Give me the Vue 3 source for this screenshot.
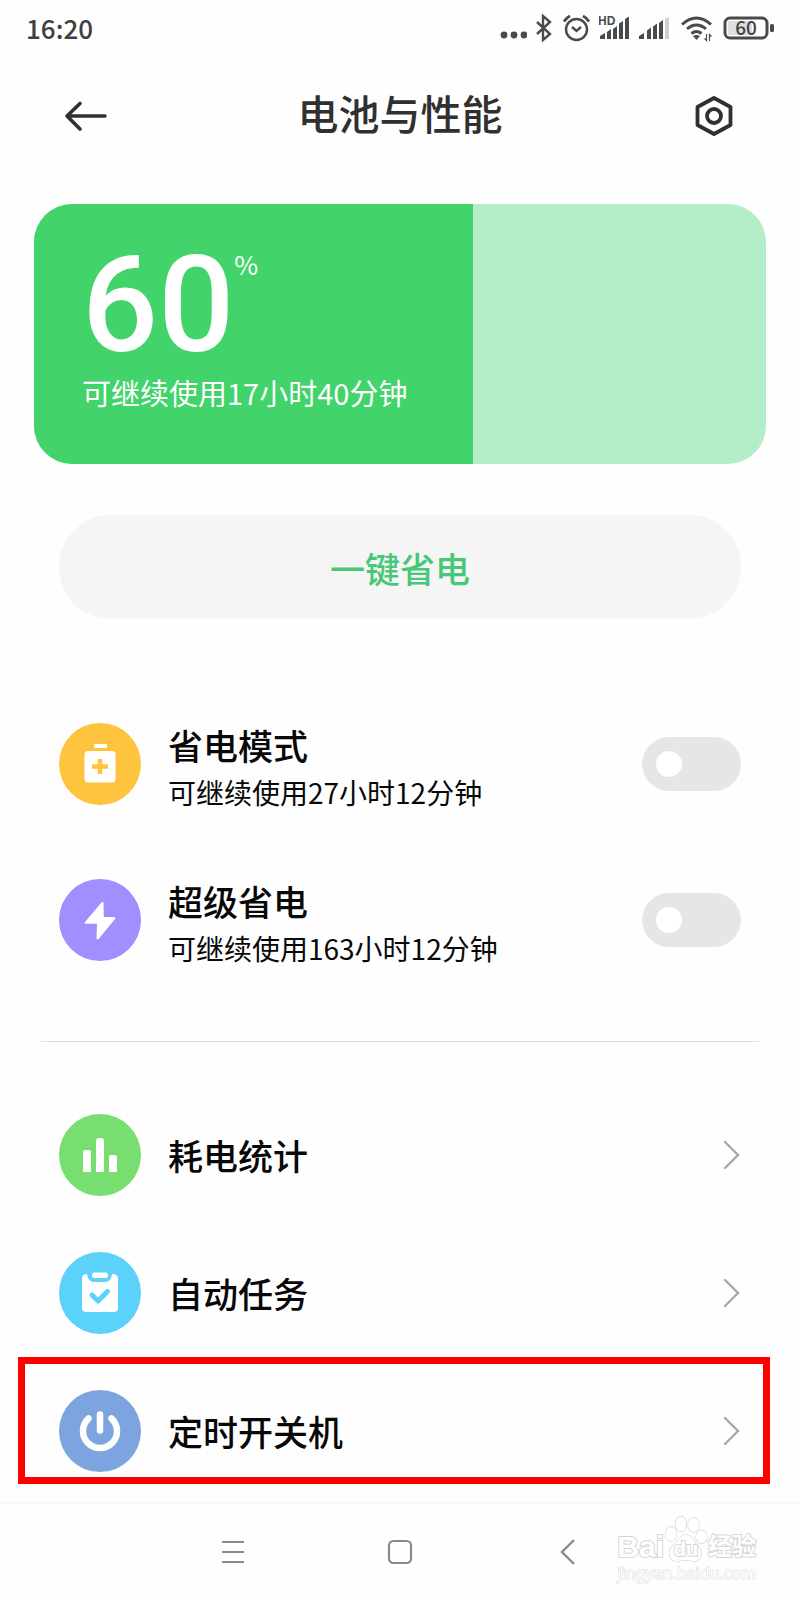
<template>
  <div class="phone">
    <div class="status">
      <span class="time">16:20</span>
      <div class="status-icons">
        <svg width="28" height="28" viewBox="0 0 28 28" fill="#4a4a4a">
          <circle cx="5" cy="21" r="3.4" />
          <circle cx="15" cy="21" r="3.4" />
          <circle cx="25" cy="21" r="3.4" />
        </svg>
        <svg width="20" height="28" viewBox="0 0 20 28" fill="none" stroke="#4a4a4a" stroke-width="2.4">
          <path d="M2 8l13 12-7 6V2l7 6L2 20" />
        </svg>
        <svg width="28" height="28" viewBox="0 0 28 28" fill="none" stroke="#4a4a4a" stroke-width="2.4">
          <circle cx="13.5" cy="15.5" r="10.5" />
          <path d="M9 13l4.500 4 4.500-4" />
          <path d="M1 7.500Q3 4 7 2M20 2q4 2 6 5.500" stroke-width="2.8" />
        </svg>
        <svg width="32" height="28" viewBox="0 0 32 28" fill="#4a4a4a">
          <text x="-1" y="11" class="hd">HD</text>
          <path d="M1 25v-3l5-3v6zM8 25v-7l4-3v10zM14 25V15l4-3v13zM20 25V9.500L24 7v18zM26 25V5l4-2.500V25z" />
        </svg>
        <svg width="34" height="28" viewBox="0 0 34 28" fill="#4a4a4a">
          <path d="M0 25v-3l5-3v6zM8 25v-8.500l4-3V25zM14 25V12.500l4-3V25zM20 25V9l4-3v19z" />
          <path d="M26 25V5l4-2v22z" fill="#cfcfcf" />
        </svg>
        <svg width="34" height="28" viewBox="0 0 34 28" fill="none" stroke="#4a4a4a" stroke-width="3">
          <path d="M1 10.500Q8 4 15.500 4T30 10.500M6 15q4.500-4 9.500-4t9.500 4M10.500 19.500q2.500-2 5-2t5 2" />
          <path d="M12 22q3.500-2 7 0l-3.500 4z" fill="#4a4a4a" stroke="none" />
          <path d="M25.500 20v6.500l-2-2M28.500 27v-6.500l2 2" stroke-width="1.2" />
        </svg>
        <svg width="52" height="28" viewBox="0 0 52 28">
          <rect x="5" y="7" width="24" height="14" fill="#dedede" />
          <rect x="2" y="4" width="42" height="20" rx="5" fill="none" stroke="#4a4a4a" stroke-width="3" />
          <rect x="47" y="10" width="4" height="8" rx="1.5" fill="#4a4a4a" />
          <text x="23" y="21" text-anchor="middle" class="charge">60</text>
        </svg>
      </div>
    </div>

    <header class="header">
      <button class="icon-btn" type="button" aria-label="返回">
        <svg width="44" height="44" viewBox="0 0 44 44" fill="none" stroke="#303030" stroke-width="3.6" stroke-linecap="round" stroke-linejoin="round">
          <path d="M41 22H3M16 9.500L3 22l13 13" />
        </svg>
      </button>
      <h1>电池与性能</h1>
      <button class="icon-btn" type="button" aria-label="设置">
        <svg width="44" height="44" viewBox="0 0 44 44" fill="none" stroke="#303030" stroke-width="3.8" stroke-linejoin="round">
          <path d="M22 4l16.500 9v18L22 40 5.500 31V13z" />
          <circle cx="22" cy="22" r="7" />
        </svg>
      </button>
    </header>

    <section class="battery">
      <div class="battery-fill" :style="{ width: level + '%' }">
        <div class="level">
          <span class="level-num">{{ level }}</span>
          <span class="level-unit">%</span>
        </div>
        <p>可继续使用17小时40分钟</p>
      </div>
    </section>

    <button class="save-btn" type="button">一键省电</button>

    <section class="modes">
      <label v-for="mode in modes" :key="mode.id" class="mode">
        <svg class="badge" viewBox="0 0 82 82">
          <circle cx="41" cy="41" r="41" :fill="mode.color" />
          <g v-if="mode.id === 'saver'">
            <rect x="35" y="21" width="13" height="4" rx="1" fill="#fff" />
            <rect x="25.5" y="28" width="31" height="31.5" rx="3.5" fill="#fff" />
            <path d="M41 36v15M33 43.500h16" :stroke="mode.color" stroke-width="4.5" />
          </g>
          <path v-else d="M42.500 23.500L26 43q-1 1.700 1 1.700h11L37.500 59q.500 2.500 2.500.500L56 40q1-2-1-2H44.800L44.500 24q-.500-2-2-.500z" fill="#fff" />
        </svg>
        <span class="mode-text">
          <span class="row-title">{{ mode.title }}</span>
          <span class="mode-note">{{ mode.note }}</span>
        </span>
        <input v-model="mode.on" class="switch" type="checkbox" role="switch" />
      </label>
    </section>

    <hr class="divider" />

    <nav class="links">
      <a v-for="item in links" :key="item.id" href="#" class="link" :class="{ marked: item.marked }">
        <svg class="badge" viewBox="0 0 82 82">
          <circle cx="41" cy="41" r="41" :fill="item.color" />
          <path v-if="item.id === 'stats'" d="M24 58V38q0-2 2-2h4q2 0 2 2v20zM37 58V27q0-3 3-3h2q3 0 3 3v31zM50 58V43q0-2 2-2h4q2 0 2 2v15z" fill="#fff" />
          <g v-else-if="item.id === 'tasks'">
            <path d="M27 22h1q1 8 7 8h11q6 0 7-8h2q4 1 4 4v30q0 4-4 4H27q-4 0-4-4V26q0-3 4-4z" fill="#fff" />
            <rect x="33" y="20.5" width="16" height="5.5" rx="2.5" fill="#fff" />
            <path d="M33 43l6 6 9.500-9.500" fill="none" :stroke="item.color" stroke-width="5" stroke-linecap="round" stroke-linejoin="round" />
          </g>
          <path v-else d="M41 24.500v16M29.500 28.500a17 17 0 1 0 23 0" fill="none" stroke="#fff" stroke-width="6.5" stroke-linecap="round" />
        </svg>
        <span class="row-title">{{ item.title }}</span>
        <svg class="chevron" viewBox="0 0 18 30" fill="none" stroke="#a8a8a8" stroke-width="2.4" stroke-linecap="round">
          <path d="M2 2l13 13L2 28" />
        </svg>
      </a>
    </nav>

    <footer class="sysnav">
      <button type="button" aria-label="菜单">
        <svg width="26" height="26" viewBox="0 0 26 26" stroke="#8a8a8a" stroke-width="2.2">
          <path d="M2 3h22M2 13h22M2 23h22" />
        </svg>
      </button>
      <button type="button" aria-label="主页">
        <svg width="26" height="26" viewBox="0 0 26 26" fill="none" stroke="#8a8a8a" stroke-width="2.2">
          <rect x="2" y="2" width="22" height="22" rx="4.5" />
        </svg>
      </button>
      <button type="button" aria-label="后退">
        <svg width="26" height="26" viewBox="0 0 26 26" fill="none" stroke="#8a8a8a" stroke-width="2.4">
          <path d="M20 1L8 13l12 12" />
        </svg>
      </button>
      <div class="brand">
        <div class="brand-name">
          <span>Bai</span>
          <span class="paw">
            <svg width="44" height="48" viewBox="0 0 44 48" fill="#fff" stroke="#d6d6d6" stroke-width="1.3">
              <ellipse cx="7" cy="19" rx="5.5" ry="7" />
              <ellipse cx="17" cy="9" rx="5.5" ry="7.5" />
              <ellipse cx="29.5" cy="10" rx="5.5" ry="7" />
              <ellipse cx="37.5" cy="22" rx="5.5" ry="6.5" />
              <path d="M22 20c6 0 7 6 11 10 6 5 6 16-3 16-4 0-5-1-8-1s-5 1-9 1c-9 0-10-11-3-16 4-4 6-10 12-10z" />
            </svg>
            <span class="du">du</span>
          </span>
          <span class="exp">经验</span>
        </div>
        <div class="brand-url">jingyan.baidu.com</div>
      </div>
    </footer>
  </div>
</template>

<script setup>
import { ref } from 'vue'

const level = ref(60)

const modes = ref([
  { id: 'saver', title: '省电模式', note: '可继续使用27小时12分钟', color: '#ffc43d', on: false },
  { id: 'ultra', title: '超级省电', note: '可继续使用163小时12分钟', color: '#a08fff', on: false },
])

const links = [
  { id: 'stats', title: '耗电统计', color: '#79de70' },
  { id: 'tasks', title: '自动任务', color: '#5bd2fa' },
  { id: 'power', title: '定时开关机', color: '#7da4de', marked: true },
]
</script>

<style>
body {
  margin: 0;
  background: #fefefe;
}
</style>

<style scoped>
.phone {
  display: flex;
  flex-direction: column;
  font-family: 'Noto Sans CJK SC', sans-serif;
  color: #080808;
}

button {
  padding: 0;
  border: 0;
  background: none;
  font-family: inherit;
  cursor: pointer;
}

svg {
  display: block;
  flex: none;
}

/* 状态栏 */
.status {
  display: flex;
  align-items: center;
  justify-content: space-between;
  height: 56px;
  padding: 0 25px 0 26px;
}

.time {
  font-size: 26px;
  font-weight: 500;
  line-height: 56px;
  color: #404040;
}

.status-icons {
  display: flex;
  gap: 8px;
}

.hd {
  font: 700 12px 'Liberation Sans', sans-serif;
}

.charge {
  font: 500 19px 'Noto Sans CJK SC', sans-serif;
  fill: #404040;
}

/* 标题栏 */
.header {
  display: flex;
  align-items: center;
  justify-content: space-between;
  height: 120px;
  padding: 0 64px;
}

.header h1 {
  margin: 0;
  padding-bottom: 8px;
  font-size: 41px;
  font-weight: 500;
  line-height: 60px;
  color: #303030;
}

/* 电量卡片 */
.battery {
  margin: 28px 34px 0;
  border-radius: 38px;
  background: #b4eec8;
  overflow: hidden;
}

.battery-fill {
  box-sizing: border-box;
  height: 260px;
  padding: 36px 0 0 48px;
  background: #42d36b;
  color: #fff;
  white-space: nowrap;
}

.level {
  display: flex;
  align-items: flex-start;
}

.level-num {
  font-family: Roboto, sans-serif;
  font-size: 134px;
  font-weight: 500;
  line-height: 132px;
}

.level-unit {
  font-size: 26px;
  line-height: 48px;
}

.battery-fill p {
  margin: 0;
  font-size: 29px;
  line-height: 40px;
}

.save-btn {
  height: 104px;
  margin: 51px 59px 0;
  border-radius: 52px;
  background: #f5f5f5;
  font-size: 35px;
  font-weight: 500;
  color: #47c878;
}

/* 省电模式 */
.modes {
  margin-top: 67px;
  padding: 0 59px;
}

.mode {
  display: flex;
  align-items: center;
  height: 156px;
  cursor: pointer;
}

.badge {
  width: 82px;
  height: 82px;
  margin-right: 27px;
}

.mode-text {
  display: flex;
  flex: 1;
  flex-direction: column;
  padding-top: 8px;
}

.row-title {
  flex: 1;
  font-size: 35px;
  font-weight: 500;
  line-height: 48px;
}

.mode-note {
  font-size: 28px;
  line-height: 46px;
}

.switch {
  display: flex;
  align-items: center;
  width: 99px;
  height: 54px;
  margin: 0;
  padding: 0 14px;
  box-sizing: border-box;
  border-radius: 27px;
  background: #e6e6e6;
  appearance: none;
  cursor: pointer;
}

.switch::before {
  content: '';
  width: 26px;
  height: 26px;
  border-radius: 50%;
  background: #fff;
}

.switch:checked {
  justify-content: flex-end;
  background: #42d36b;
}

.divider {
  width: auto;
  height: 1px;
  margin: 43px 41px 0;
  border: 0;
  background: #dedede;
}

/* 功能入口 */
.links {
  margin-top: 44px;
}

.link {
  position: relative;
  display: flex;
  align-items: center;
  height: 138px;
  padding: 0 59px;
  color: inherit;
  text-decoration: none;
}

.marked::after {
  content: '';
  position: absolute;
  inset: -5px 30px 16px 18px;
  border: 7px solid #fe0000;
}

.chevron {
  width: 18px;
  height: 30px;
}

/* 导航键 */
.sysnav {
  position: relative;
  display: flex;
  align-items: center;
  justify-content: center;
  gap: 141px;
  height: 95px;
  margin-top: 2px;
  border-top: 2px solid #f6f6f6;
}

.brand {
  position: absolute;
  right: 44px;
  bottom: 16px;
  color: #fff;
  -webkit-text-stroke: 2px #d6d6d6;
  paint-order: stroke fill;
}

.brand-name {
  display: flex;
  align-items: flex-end;
  justify-content: flex-end;
  font: 700 30px/32px 'Liberation Sans', 'Noto Sans CJK SC', sans-serif;
}

.paw {
  position: relative;
}

.du {
  position: absolute;
  right: 0;
  bottom: 4px;
  left: 0;
  font-size: 20px;
  line-height: 20px;
  text-align: center;
}

.exp {
  font-size: 24px;
}

.brand-url {
  font: 16px/20px 'Noto Sans', sans-serif;
  text-align: right;
  -webkit-text-stroke-width: 1px;
}
</style>
